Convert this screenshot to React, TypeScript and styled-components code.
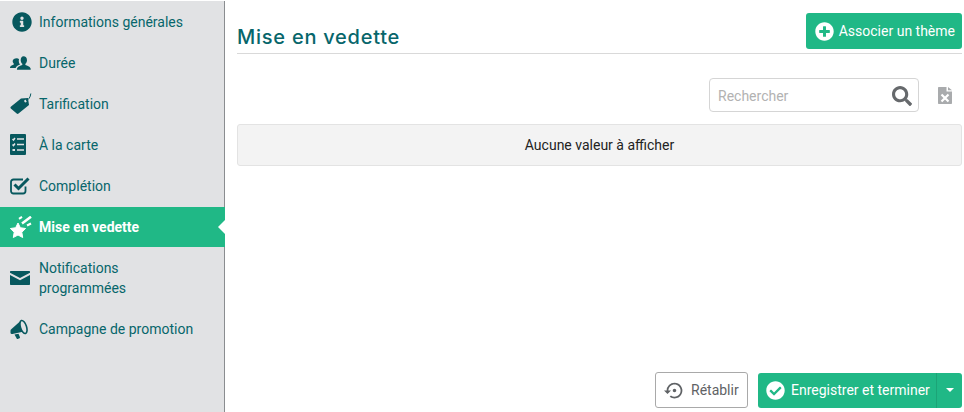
import React from "react";
import styled, { createGlobalStyle } from "styled-components";
import { FaInfoCircle, FaPlusCircle, FaCheckCircle, FaSearch } from "react-icons/fa";
import { MdSettingsBackupRestore } from "react-icons/md";

const GlobalStyle = createGlobalStyle`
  html, body { margin: 0; padding: 0; background: #fff; }
  body { font-family: Roboto, "Liberation Sans", sans-serif; font-size: 14px; }
  * { box-sizing: border-box; }
`;

const DuoUsers = () => (
  <svg viewBox="0 0 22 16" width="21" height="16" fill="currentColor">
    <path d="M14 1c2.400 0 3.800 1.800 3.800 4 0 1.600-.7 3-1.700 3.800v1.400c2 .6 4.600 1.600 5.400 3.400.2.500.2 1.400.2 1.400H7.300s0-.9.2-1.400c.7-1.800 3.400-2.800 5.400-3.400V8.800C11.900 8 11.200 6.600 11.200 5c0-2.200 1.400-4 2.800-4z" />
    <path d="M7 3c1 0 1.900.4 2.500 1.200-.2.500-.3 1.100-.3 1.800 0 1.500.5 2.800 1.400 3.700-1.700.6-4 1.700-4.700 3.500H0s0-.6.2-1c.6-1.300 2.300-2 3.800-2.500v-1C3.300 8.100 2.800 7.100 2.800 6c0-1.800 2-3 4.200-3z" />
  </svg>
);

const PriceTag = () => (
  <svg viewBox="0 0 22 22" width="22" height="22" fill="currentColor">
    <path d="M11 5.500 18 5l1 7L8.500 20.500c-.6.500-1.300.500-1.800 0L.8 15.500c-.5-.5-.5-1.200 0-1.700zm4.500 1.300a1.300 1.300 0 1 0 0 2.600 1.300 1.300 0 0 0 0-2.600z" />
    <path d="M16 8c2.500-1.500 4.500-3.500 4.800-7.500" fill="none" stroke="currentColor" strokeWidth="1" />
  </svg>
);

const Checklist = () => (
  <svg viewBox="0 0 16 21" width="16" height="21">
    <rect width="16" height="21" rx="1" fill="currentColor" />
    <g stroke="#e1e2e4" strokeWidth="1.500" fill="none">
      <path d="M7 5h7M7 10.500h7M7 16h7" />
      <path d="M2.500 5l1 1 1.500-2M2.500 10.500l1 1 1.500-2" />
    </g>
    <rect x="2.500" y="15" width="2.500" height="2" fill="#e1e2e4" />
  </svg>
);

const CheckBox = () => (
  <svg viewBox="0 0 20 18" width="20" height="18" fill="none">
    <path d="M15.500 9.500V14c0 1.500-1 2.500-2.500 2.500H3.500C2 16.500 1 15.500 1 14V5c0-1.500 1-2.500 2.500-2.500H13" stroke="currentColor" strokeWidth="1.800" />
    <path d="M4.500 7.500 8.500 11.500 18.500 1.500" stroke="currentColor" strokeWidth="3" />
  </svg>
);

const Envelope = () => (
  <svg viewBox="0 0 20 14" width="20" height="14" fill="currentColor">
    <path d="M1 0h18c.6 0 1 .4 1 1v.8l-10 5.200L0 1.800V1c0-.6.4-1 1-1z" />
    <path d="M0 4l10 5.200L20 4v9c0 .6-.4 1-1 1H1c-.6 0-1-.4-1-1z" />
  </svg>
);

const Megaphone = () => (
  <svg viewBox="0 0 18 20" width="18" height="20" fill="currentColor">
    <path d="M.5 12c0-1 .3-1.500 1-2L10.500 2 14 12.500l-11.500 2.500c-1 .2-1.700-.3-2-1z" />
    <path d="M4.500 15.500 8.500 14.700l1.500 3.600c.1.500-.1.800-.5 1l-1.800.6c-.5.100-.9-.1-1-.5z" />
    <ellipse cx="13.500" cy="8" rx="3" ry="6.800" transform="rotate(-18 13.500 8)" fill="#e1e2e4" stroke="currentColor" strokeWidth="1.600" />
  </svg>
);

const ShootingStar = () => (
  <svg viewBox="0 0 24 23" width="24" height="23" fill="#fff">
    <polygon points="8,7 10.350,11.760 15.600,12.500 11.800,16.240 12.700,21.500 8,19 3.300,21.500 4.200,16.240 .4,12.500 5.650,11.760" stroke="#fff" strokeWidth="1" strokeLinejoin="round" />
    <path d="M12 7.500 21 .7" stroke="#fff" strokeWidth="2.500" fill="none" />
    <path d="M9 2.800 12 .8M17 9.500 21 7.500" stroke="#fff" strokeWidth="2" fill="none" />
  </svg>
);

const ExcelFile = () => (
  <svg viewBox="0 0 14 17" width="14" height="17" fill="currentColor">
    <path d="M0 1c0-.6.4-1 1-1h7.500v4.500H14V16c0 .6-.4 1-1 1H1c-.6 0-1-.4-1-1z" />
    <path d="M10 0l4 3.200H10z" />
    <path d="M3.500 7.500 10.500 14.500M10.500 7.500 3.500 14.500" stroke="#fff" strokeWidth="2.200" fill="none" />
  </svg>
);

const Layout = styled.div`
  display: flex;
  width: 964px;
  height: 412px;
  overflow: hidden;
`;

const Sidebar = styled.nav`
  width: 225px;
  height: 411px;
  margin-top: 1px;
  flex-shrink: 0;
  background: #e1e2e4;
  border-right: 1px solid #8a8d90;
`;

const Item = styled.div<{ $active?: boolean; $tall?: boolean }>`
  position: relative;
  display: flex;
  align-items: center;
  min-height: ${(p) => (p.$tall ? "61px" : p.$active ? "40px" : "41px")};
  margin-top: ${(p) => (p.$active ? "1px" : "0")};
  margin-right: ${(p) => (p.$active ? "-1px" : "0")};
  padding: 0 10px 0 0;
  background: ${(p) => (p.$active ? "#20b886" : "transparent")};
  color: ${(p) => (p.$active ? "#fff" : "#07666b")};
  font-weight: ${(p) => (p.$active ? 700 : 400)};
  line-height: 20px;
  ${(p) =>
    p.$active &&
    `&::after {
      content: "";
      position: absolute;
      right: 0;
      top: 13px;
      border: 7px solid transparent;
      border-right-color: #fff;
      border-left-width: 0;
    }`}
`;

const ItemIcon = styled.span<{ $active?: boolean }>`
  width: 39px;
  display: flex;
  padding-left: 10px;
  flex-shrink: 0;
  color: ${(p) => (p.$active ? "#fff" : "#07585e")};
`;

const InfoIcon = styled(FaInfoCircle)`
  margin-left: 2px;
`;

const Main = styled.main`
  flex: 1;
  display: flex;
  flex-direction: column;
  padding: 13px 2px 4px 12px;
`;

const Header = styled.header`
  display: flex;
  justify-content: space-between;
  align-items: flex-start;
  height: 41px;
  border-bottom: 1px solid #d9d9d9;
`;

const Title = styled.h1`
  margin: 11px 0 0;
  font-family: Inter, "Open Sans", sans-serif;
  font-size: 20px;
  line-height: 26px;
  font-weight: 500;
  letter-spacing: 0.75px;
  color: #07666b;
`;

const PrimaryButton = styled.button`
  display: flex;
  align-items: center;
  gap: 5px;
  height: 36px;
  padding: 0 7px 0 9px;
  border: 0;
  border-radius: 3px;
  background: #20b886;
  color: #fff;
  font: 400 14px Roboto, sans-serif;
`;

const Toolbar = styled.div`
  display: flex;
  justify-content: flex-end;
  align-items: center;
  gap: 19px;
  margin-top: 24px;
  padding-right: 10px;
`;

const SearchBox = styled.div`
  display: flex;
  align-items: center;
  justify-content: space-between;
  width: 210px;
  height: 34px;
  padding: 2px 6px 0 8px;
  border: 1px solid #d5d5d5;
  border-radius: 4px;
  color: #b2b2b2;
  svg { color: #66696c; }
`;

const ExportIcon = styled.span`
  display: flex;
  padding-top: 1px;
  color: #a9abad;
`;

const EmptyRow = styled.div`
  display: flex;
  align-items: center;
  justify-content: center;
  height: 42px;
  margin-top: 12px;
  background: #f3f3f3;
  border: 1px solid #e3e3e3;
  border-radius: 3px;
  color: #222;
`;

const Footer = styled.footer`
  display: flex;
  justify-content: flex-end;
  align-items: center;
  gap: 10px;
  margin-top: auto;
`;

const ResetButton = styled.button`
  display: flex;
  align-items: center;
  gap: 6px;
  width: 93px;
  height: 36px;
  padding: 0 0 0 8px;
  background: #fff;
  border: 1px solid #a9a9a9;
  border-radius: 3px;
  color: #5f6265;
  font: 400 14px Roboto, sans-serif;
`;

const SplitButton = styled.div`
  display: flex;
  height: 35px;
  border-radius: 3px;
  background: #20b886;
  color: #fff;
`;

const SaveAction = styled.div`
  display: flex;
  align-items: center;
  gap: 6px;
  width: 179px;
  padding-left: 8px;
  border-right: 1px solid #1ca477;
`;

const Caret = styled.div`
  width: 25px;
  display: flex;
  align-items: center;
  justify-content: center;
  &::before {
    content: "";
    border: 4px solid transparent;
    border-top-color: #fff;
    border-bottom-width: 0;
  }
`;

const items = [
  { label: "Informations générales", icon: <InfoIcon size={20} /> },
  { label: "Durée", icon: <DuoUsers /> },
  { label: "Tarification", icon: <PriceTag /> },
  { label: "À la carte", icon: <Checklist /> },
  { label: "Complétion", icon: <CheckBox /> },
  { label: "Mise en vedette", icon: <ShootingStar />, active: true },
  { label: <>Notifications<br />programmées</>, icon: <Envelope />, tall: true },
  { label: "Campagne de promotion", icon: <Megaphone /> },
];

export default function App() {
  return (
    <Layout>
      <GlobalStyle />
      <Sidebar>
        {items.map((item, i) => (
          <Item key={i} $active={item.active} $tall={item.tall}>
            <ItemIcon $active={item.active}>{item.icon}</ItemIcon>
            <span>{item.label}</span>
          </Item>
        ))}
      </Sidebar>
      <Main>
        <Header>
          <Title>Mise en vedette</Title>
          <PrimaryButton>
            <FaPlusCircle size={19} />
            Associer un thème
          </PrimaryButton>
        </Header>
        <Toolbar>
          <SearchBox>
            Rechercher
            <FaSearch size={20} />
          </SearchBox>
          <ExportIcon>
            <ExcelFile />
          </ExportIcon>
        </Toolbar>
        <EmptyRow>Aucune valeur à afficher</EmptyRow>
        <Footer>
          <ResetButton>
            <MdSettingsBackupRestore size={21} />
            Rétablir
          </ResetButton>
          <SplitButton>
            <SaveAction>
              <FaCheckCircle size={19} />
              Enregistrer et terminer
            </SaveAction>
            <Caret />
          </SplitButton>
        </Footer>
      </Main>
    </Layout>
  );
}
